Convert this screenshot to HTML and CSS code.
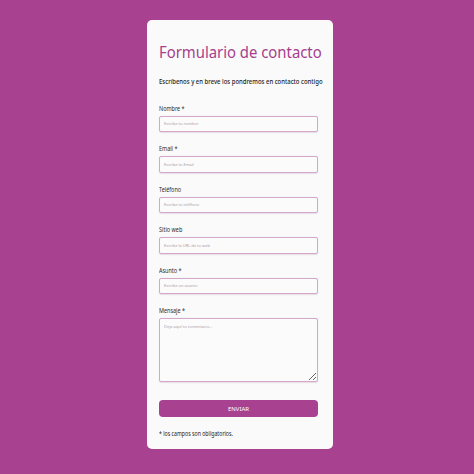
FILE: index.html
```html
<!DOCTYPE html>
<html lang="es">
<head>
<meta charset="utf-8">
<title>Formulario de contacto</title>
<link rel="stylesheet" href="styles.css">
</head>
<body>
<main class="card">
  <h1 class="title"><span class="squeeze">Formulario de contacto</span></h1>
  <p class="subtitle"><span class="squeeze">Escríbenos y en breve los pondremos en contacto contigo</span></p>
  <form class="form">
    <div class="field">
      <label class="label"><span class="squeeze">Nombre *</span></label>
      <input class="input" type="text" placeholder="Escribe tu nombre">
    </div>
    <div class="field">
      <label class="label"><span class="squeeze">Email *</span></label>
      <input class="input" type="text" placeholder="Escribe tu Email">
    </div>
    <div class="field">
      <label class="label"><span class="squeeze">Teléfono</span></label>
      <input class="input" type="text" placeholder="Escribe tu teléfono">
    </div>
    <div class="field">
      <label class="label"><span class="squeeze">Sitio web</span></label>
      <input class="input" type="text" placeholder="Escribe la URL de tu web">
    </div>
    <div class="field">
      <label class="label"><span class="squeeze">Asunto *</span></label>
      <input class="input" type="text" placeholder="Escribe un asunto">
    </div>
    <div class="field">
      <label class="label"><span class="squeeze">Mensaje *</span></label>
      <textarea class="input textarea" placeholder="Deja aquí tu comentario..."></textarea>
    </div>
    <button class="button" type="button">ENVIAR</button>
  </form>
  <p class="note"><span class="squeeze">* los campos son obligatorios.</span></p>
</main>
</body>
</html>
```
FILE: styles.css
```css
html, body {
  margin: 0;
  padding: 0;
}
body {
  background: #a8418f;
  font-family: "Noto Sans", "Open Sans", sans-serif;
  color: #222;
  height: 474px;
  overflow: hidden;
}
.card {
  box-sizing: border-box;
  width: 186px;
  margin: 20px 0 0 147px;
  background: #fafafa;
  border-radius: 5px;
  padding: 21px 15px 12px 12px;
  height: 429px;
}
.squeeze {
  display: inline-block;
  transform-origin: left center;
  white-space: nowrap;
}
.title {
  margin: 0;
  font-size: 16.5px;
  font-weight: 400;
  color: #a63d8d;
  line-height: 22px;
  white-space: nowrap;
}
.title .squeeze {
  transform: scaleX(0.9);
}
.subtitle {
  margin: 14px 0 0;
  font-size: 7px;
  font-weight: 500;
  line-height: 10px;
  white-space: nowrap;
}
.subtitle .squeeze {
  transform: scaleX(0.85);
}
.form {
  margin-top: 16.5px;
  display: flex;
  flex-direction: column;
}
.field {
  display: flex;
  flex-direction: column;
  margin-bottom: 12px;
}
.label {
  font-size: 6.5px;
  line-height: 9px;
  margin-bottom: 3px;
  color: #2a2a2a;
}
.label .squeeze {
  transform: scaleX(0.84);
}
.input {
  box-sizing: border-box;
  width: 159px;
  height: 16.5px;
  border: 1px solid #d4a8ca;
  border-radius: 2px;
  background: #fcfbfc;
  box-shadow: 0 0.5px 1px rgba(120, 60, 110, 0.15);
  padding: 0 4px;
  font-family: inherit;
  font-size: 4px;
  outline: none;
}
.input::placeholder {
  color: #a8a0a6;
}
.textarea {
  height: 64px;
  padding: 5px 4px;
  resize: vertical;
}
.button {
  margin-top: 6px;
  width: 159px;
  height: 17px;
  border: 0;
  border-radius: 4px;
  background: #a8418f;
  color: #fff;
  font-family: inherit;
  font-size: 6px;
  padding: 0;
}
.note {
  margin: 11.5px 0 0;
  font-size: 6.5px;
  line-height: 9px;
}
.note .squeeze {
  transform: scaleX(0.8);
}
```
